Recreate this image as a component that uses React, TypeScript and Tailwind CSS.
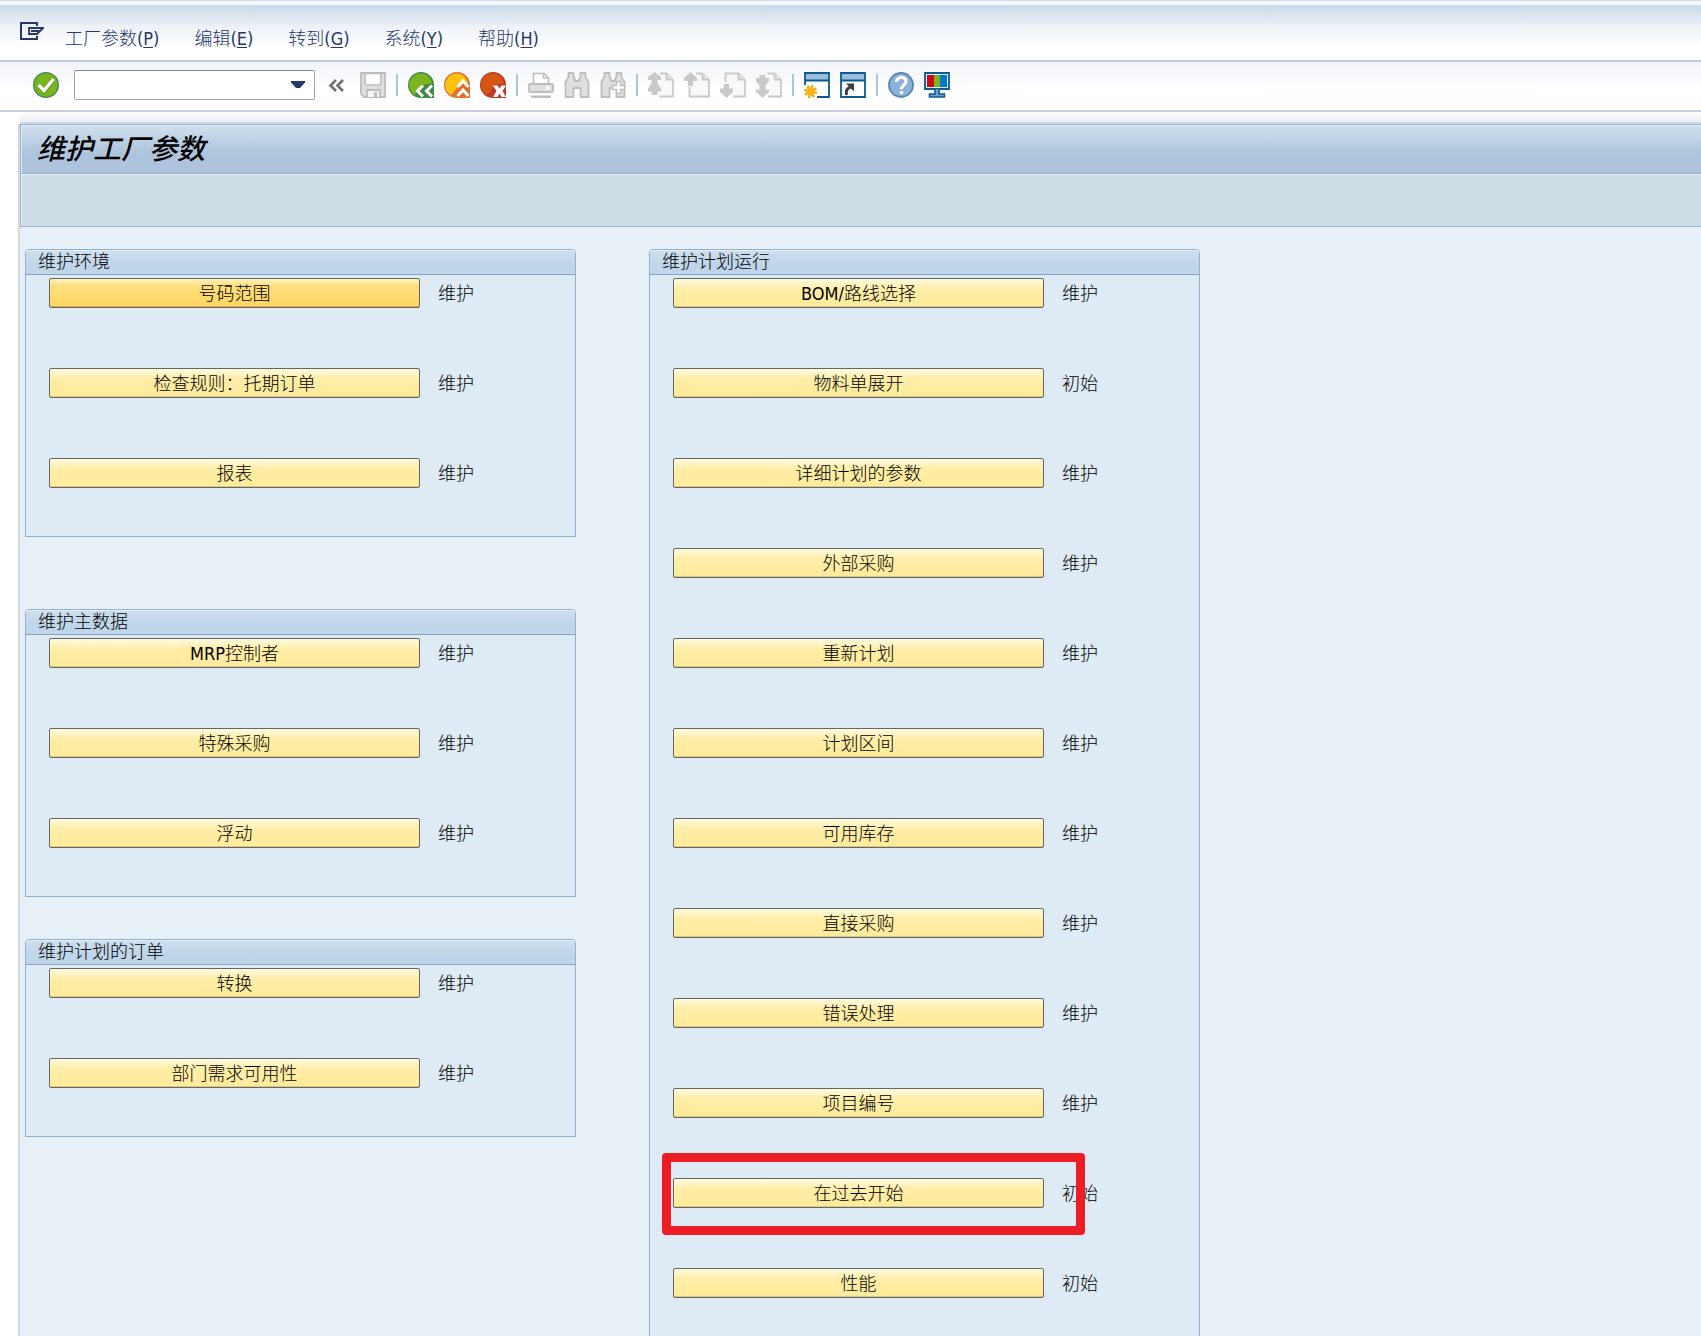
import type { ReactNode } from 'react';
import { clsx } from 'clsx';

type Row = { label: string; status: string; focused?: boolean; marked?: boolean };

const menus = [
  { text: '工厂参数', hotkey: 'P' },
  { text: '编辑', hotkey: 'E' },
  { text: '转到', hotkey: 'G' },
  { text: '系统', hotkey: 'Y' },
  { text: '帮助', hotkey: 'H' },
];

const environment: Row[] = [
  { label: '号码范围', status: '维护', focused: true },
  { label: '检查规则：托期订单', status: '维护' },
  { label: '报表', status: '维护' },
];

const masterData: Row[] = [
  { label: 'MRP控制者', status: '维护' },
  { label: '特殊采购', status: '维护' },
  { label: '浮动', status: '维护' },
];

const plannedOrders: Row[] = [
  { label: '转换', status: '维护' },
  { label: '部门需求可用性', status: '维护' },
];

const planningRun: Row[] = [
  { label: 'BOM/路线选择', status: '维护' },
  { label: '物料单展开', status: '初始' },
  { label: '详细计划的参数', status: '维护' },
  { label: '外部采购', status: '维护' },
  { label: '重新计划', status: '维护' },
  { label: '计划区间', status: '维护' },
  { label: '可用库存', status: '维护' },
  { label: '直接采购', status: '维护' },
  { label: '错误处理', status: '维护' },
  { label: '项目编号', status: '维护' },
  { label: '在过去开始', status: '初始', marked: true },
  { label: '性能', status: '初始' },
];

function Icon({ children }: { children: ReactNode }) {
  return (
    <svg viewBox="0 0 26 26" className="block size-[26px]" fill="none" aria-hidden="true">
      {children}
    </svg>
  );
}

function Tool({ name, disabled, children }: { name: string; disabled?: boolean; children: ReactNode }) {
  return (
    <button type="button" aria-label={name} disabled={disabled} className="size-[26px] shrink-0">
      <Icon>{children}</Icon>
    </button>
  );
}

function Separator() {
  return <span className="h-[22px] w-0.5 shrink-0 bg-[#a9c6e0]" />;
}

// round button cut off square at the lower right, where the symbol sits
function Disc({ fill, edge }: { fill: string; edge: string }) {
  return (
    <>
      <path d="M13 0a13 13 0 1 0 0 26h13V13A13 13 0 0 0 13 0Z" fill={edge} />
      <path d="M13 1.500A11.500 11.500 0 0 0 7 23L16 12.500l8-1A11.500 11.500 0 0 0 13 1.500Z" fill={fill} />
    </>
  );
}

function PageSheet({ d }: { d: string }) {
  return (
    <>
      <path d={d} fill="#f8f8f8" stroke="#c9c9c9" strokeWidth="1.8" />
      <path d="M18.500 1.500v6H25" fill="#e4e4e4" stroke="#c9c9c9" strokeWidth="1.8" />
    </>
  );
}

function Binoculars() {
  return (
    <path
      d="M4.500 1h5v4l1.500 2v2h4V7l1.500-2V1h5v4l3 5v15h-8v-9h-7v9h-8V10l3-5Z"
      fill="#dfdfdf"
      stroke="#bebebe"
      strokeWidth="1.8"
      strokeLinejoin="round"
    />
  );
}

function Toolbar() {
  return (
    <div className="flex h-[50px] shrink-0 items-center border-b-2 border-[#c9cfdc] bg-linear-to-b from-[#f1f4f9] to-white to-60% pb-0.5 pl-[33px]">
      <Tool name="输入">
        <circle cx="13" cy="13" r="12.3" fill="#7ab51d" stroke="#4b8a56" strokeWidth="1.4" />
        <path d="m6 13.500 5 5.500L20 7.500" stroke="#4f8a20" strokeWidth="5" opacity=".5" />
        <path d="m5.500 13 5.500 5.500L20.500 7" stroke="#fff" strokeWidth="3.4" />
      </Tool>
      <div className="relative ml-[15px] h-[30px] w-[241px] shrink-0">
        <input
          aria-label="命令"
          className="block h-full w-full rounded-xs border border-[#a0a3a6] border-t-[#84888c] bg-white px-2 text-lg outline-none"
        />
        <svg viewBox="0 0 14 8" className="absolute top-[11px] right-2.5 h-2 w-3.5" aria-hidden="true">
          <path d="M0 0h14v1.500L9 7H5L0 1.500Z" fill="#25376b" />
        </svg>
      </div>
      <div className="ml-[9px] flex items-center gap-2.5">
        <Tool name="隐藏命令栏">
          <path d="m12 8-5.500 5.500L12 19M19 8l-5.500 5.500L19 19" stroke="#707070" strokeWidth="2.6" />
        </Tool>
        <Tool name="保存" disabled>
          <path d="M1 1h24v24H4l-3-3Z" fill="#dfdfdf" stroke="#bdbdbd" strokeWidth="1.8" />
          <path d="M5 1.500h16v10l-1.500 1.500h-13L5 11.500Z" fill="#fff" stroke="#bdbdbd" strokeWidth="1.6" />
          <path d="M7 25v-7h13v7" fill="#f4f4f4" stroke="#bdbdbd" strokeWidth="1.8" />
          <path d="M14 20h3v5h-3Z" fill="#bdbdbd" />
        </Tool>
        <Separator />
        <Tool name="返回">
          <Disc fill="#7ab51d" edge="#3e8a48" />
          <path d="m15 13.500-5.500 5.500 5.500 5.500M24 13.500 18.500 19l5.500 5.500" stroke="#fff" strokeWidth="3" />
        </Tool>
        <Tool name="退出">
          <Disc fill="#fdc20f" edge="#e2702a" />
          <path d="m13.500 15 5.500-6 5.500 6M13.500 24l5.500-6 5.500 6" stroke="#fff" strokeWidth="3" />
        </Tool>
        <Tool name="取消">
          <Disc fill="#d95512" edge="#bb3a26" />
          <path d="M13 13.500h4.500l2 3 2-3H26L22.500 19l3.500 6h-4.500l-2-3.500-2 3.500H13l3.500-6Z" fill="#fff" />
        </Tool>
        <Separator />
        <Tool name="打印" disabled>
          <path d="M5.500 12V1.500H16l4.500 4.500v6" fill="#fff" stroke="#bdbdbd" strokeWidth="1.6" />
          <path d="M15.500 1.500V6h5" stroke="#bdbdbd" strokeWidth="1.5" />
          <rect x="1" y="12" width="24" height="8" rx="1" fill="#dfdfdf" stroke="#bdbdbd" strokeWidth="1.8" />
          <path d="M18 14.500h3.500v3H18Z" fill="#fff" />
          <path d="M3 23.500h20v1.200l-1 1.300H4l-1-1.300Z" fill="#bdbdbd" />
        </Tool>
        <Tool name="查找" disabled>
          <Binoculars />
        </Tool>
        <Tool name="继续查找" disabled>
          <Binoculars />
          <path
            d="M16.500 9.500h4v4h4v4h-4v4h-4v-4h-4v-4h4Z"
            fill="#fff"
            stroke="#bebebe"
            strokeWidth="1.4"
          />
        </Tool>
        <Separator />
        <Tool name="首页" disabled>
          <PageSheet d="M12 1.500h6.500L25 8v16.500H11.500" />
          <path d="M6.500 0 13 5v3H9.500v3.500L13 16.500v3H9.500V23h-6v-3.500H0v-3l3.500-5V8H0V5Z" fill="#c9c9c9" />
        </Tool>
        <Tool name="上一页" disabled>
          <PageSheet d="M12 1.500h6.500L25 8v16.500H5.500V15" />
          <path d="M6.500 0 13 6v3H9v5H4V9H0V6Z" fill="#c9c9c9" />
        </Tool>
        <Tool name="下一页" disabled>
          <PageSheet d="M5.500 10V1.500h13L25 8v16.500H13" />
          <path d="M4 12h5v4.500h4V20l-6.500 6L0 20v-3.500h4Z" fill="#c9c9c9" />
        </Tool>
        <Tool name="末页" disabled>
          <PageSheet d="M11.500 1.500h7L25 8v16.500H12" />
          <path d="M3.500 3h6v3H13v3l-3.500 5v3.500H13V20l-6.500 6L0 20v-2.500h3.500V14L0 9V6h3.500Z" fill="#c9c9c9" />
        </Tool>
        <Separator />
        <Tool name="创建新会话">
          <path d="M1 1h24v24H1Z" fill="#fff" />
          <path d="M1 1h24v7H1Z" fill="#9bbcdc" />
          <path d="M1 13V1h24v24H13M1 8.500h24" stroke="#0b5c90" strokeWidth="1.8" />
          <circle cx="6.500" cy="19.500" r="5.200" stroke="#f5a000" strokeWidth="2.600" strokeDasharray="2 2.080" />
          <circle cx="6.500" cy="19.500" r="4.500" fill="#ffb511" />
        </Tool>
        <Tool name="生成快捷方式">
          <path d="M1 1h24v24H1Z" fill="#fff" />
          <path d="M1 1h24v7H1Z" fill="#9bbcdc" />
          <path d="M1 1h24v24H1ZM1 8.500h24" stroke="#0b5c90" strokeWidth="1.800" />
          <path d="M6.500 23c-1-5 1-7.500 5-8" stroke="#3d3d3d" strokeWidth="3" />
          <path d="M6 11.500h8v8Z" fill="#3d3d3d" />
        </Tool>
        <Separator />
        <Tool name="帮助">
          <circle cx="13" cy="13" r="12" fill="#8db2da" stroke="#5586af" strokeWidth="1.800" />
          <path d="M8.500 10c0-6 9.500-6 9.500-.8 0 4-4.500 3.800-4.500 8" stroke="#fff" strokeWidth="3.200" />
          <path d="M11.800 19h3.400v3.200h-3.400Z" fill="#fff" />
        </Tool>
        <Tool name="定制本地布局">
          <path d="M1 1h24v16H1Z" fill="#dcebf5" stroke="#0b5c90" strokeWidth="1.800" />
          <path d="M3 3h7v12H3Z" fill="#cc0a0f" />
          <path d="M10 3h6v12h-6Z" fill="#7ab51d" />
          <path d="M16 3h7v12h-7Z" fill="#0577c8" />
          <path d="M11 17v5H5.500v3h15v-3H15v-5" fill="#6fa3c8" stroke="#0b5c90" strokeWidth="1.600" />
        </Tool>
      </div>
    </div>
  );
}

function ParameterRow({ label, status, focused, marked }: Row) {
  return (
    <div className="relative flex h-[30px] gap-[18px] leading-[30px]">
      <button
        type="button"
        className={clsx(
          'h-[30px] w-[371px] rounded-xs border border-[#666662] text-center',
          focused
            ? 'bg-linear-to-b from-[#fff0bd] via-[#ffdf7e] via-25% to-[#ffd55f] shadow-[inset_0_-1px_0_#d6ab45]'
            : 'bg-linear-to-b from-[#fffae0] via-[#ffeea8] via-35% to-[#ffeb9a] shadow-[inset_0_-1px_0_#d9c681]',
        )}
      >
        {label}
      </button>
      <span className="pt-px">{status}</span>
      {marked && (
        <span className="pointer-events-none absolute -top-[25px] -left-[11px] h-[82px] w-[423px] rounded-sm border-9 border-[#ee1c24]" />
      )}
    </div>
  );
}

function Group({ title, rows }: { title: string; rows: Row[] }) {
  return (
    <section className="w-[551px] rounded-t-sm border border-[#8fb0d0] bg-[#deebf4]">
      <h2 className="h-[25px] rounded-t-sm border-b border-[#86a5c6] bg-linear-to-b from-[#d0dfee] to-[#bfd5e9] to-60% pl-3 leading-6 shadow-[inset_0_1px_0_#e6eff7]">
        {title}
      </h2>
      <div className="flex flex-col gap-[60px] pt-[3px] pb-12 pl-[23px]">
        {rows.map((row) => (
          <ParameterRow key={row.label} {...row} />
        ))}
      </div>
    </section>
  );
}

export default function App() {
  return (
    <div className="flex h-screen flex-col overflow-hidden bg-white font-['DejaVu_Sans_Condensed','Noto_Sans_CJK_SC',sans-serif] text-lg font-light text-black">
      <div className="h-[5px] shrink-0 border-t border-[#cfdcec] bg-[#f4f7fb]" />
      <nav className="flex h-[57px] shrink-0 items-start border-b-2 border-[#c3cbda] bg-linear-to-b from-[#cbd8e7] via-[#eef2f8] via-40% to-white to-75% pl-5">
        <button type="button" aria-label="系统菜单" className="mt-4 h-5 w-6 shrink-0">
          <svg viewBox="0 0 24 20" className="block h-5 w-6" fill="none" aria-hidden="true">
            <path d="M17 5V2H1v16h16v-3" stroke="#25376b" strokeWidth="2" />
            <path d="M24 7H9v6h8l6-6M11 10h8" stroke="#25376b" strokeWidth="1.800" />
          </svg>
        </button>
        <ul className="mt-5 ml-[21px] flex gap-[35px] leading-[27px] text-[#25376b]">
          {menus.map((menu) => (
            <li key={menu.hotkey}>
              <button type="button" className="block whitespace-nowrap">
                {menu.text}(<span className="underline underline-offset-2">{menu.hotkey}</span>)
              </button>
            </li>
          ))}
        </ul>
      </nav>

      <Toolbar />

      <div className="ml-5 h-3 shrink-0 border-b-2 border-[#d3d9e4] bg-linear-to-b from-white to-[#e9eef6]" />
      <main className="ml-[18px] min-h-0 flex-1 border-l-2 border-[#d3d8e6] bg-[#e8f0f7]">
        <h1 className="h-[50px] border border-r-0 border-[#9bb0c9] bg-linear-to-b from-[#d0e0ee] via-[#adc4dc] via-60% to-[#adc4dc] pl-4 text-[28px] leading-[50px] font-medium italic shadow-[inset_1px_1px_0_#e6eff6]">
          维护工厂参数
        </h1>
        <div className="h-[53px] border-b border-l border-[#a3b4c9] bg-[#cfdde7] shadow-[inset_1px_1px_0_#e9f1f6]" />
        <div className="flex items-start gap-[73px] pt-[22px] pl-[5px]">
          <div className="flex flex-col">
            <Group title="维护环境" rows={environment} />
            <div className="mt-[72px] mb-[42px]">
              <Group title="维护主数据" rows={masterData} />
            </div>
            <Group title="维护计划的订单" rows={plannedOrders} />
          </div>
          <Group title="维护计划运行" rows={planningRun} />
        </div>
      </main>
    </div>
  );
}
